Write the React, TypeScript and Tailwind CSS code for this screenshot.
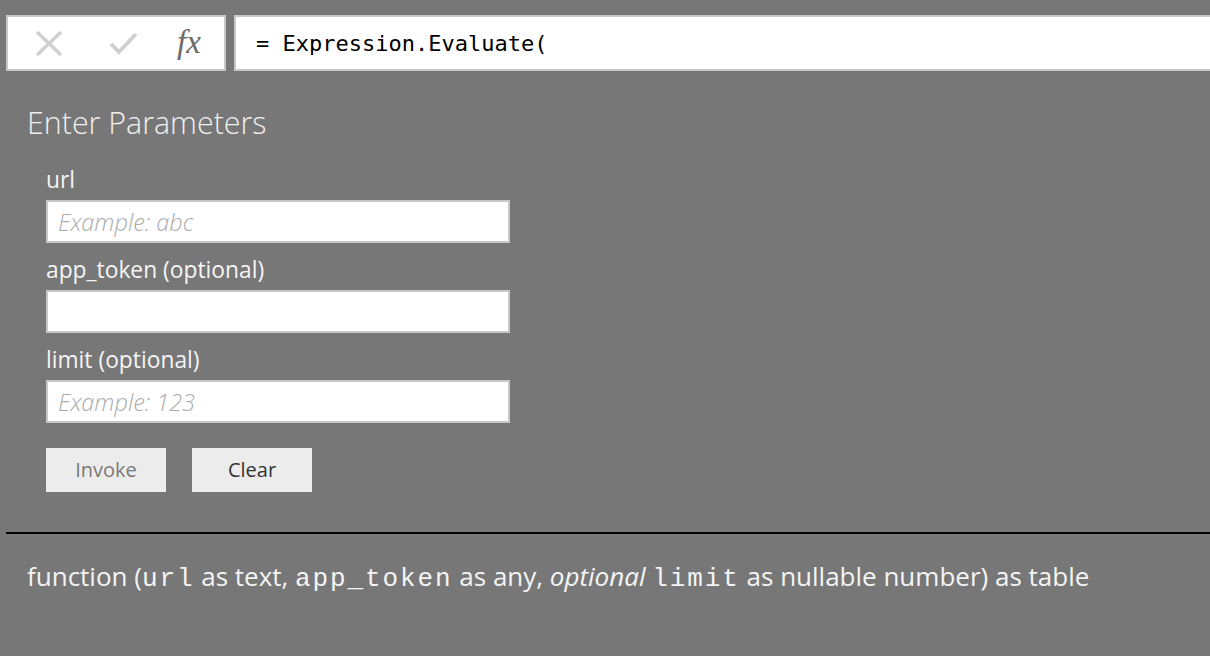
import React from "react";

const sans = "font-['Segoe_UI','Open_Sans',sans-serif]";
const mono = "font-['Liberation_Mono',monospace] text-[26px] tracking-[1.9px]";

const Field = ({ label, placeholder }: { label: string; placeholder?: string }) => (
  <div className="flex flex-col">
    <label className="text-[22.8px] leading-[30px] text-[#f4f4f4] mb-[5px]">{label}</label>
    <input
      className="w-[464px] h-[43px] bg-white border-2 border-[#c8c8c8] px-[10px] text-[23.5px] outline-none placeholder:italic placeholder:font-light placeholder:text-[#ababab]"
      placeholder={placeholder}
    />
  </div>
);

export default function App() {
  return (
    <div className={`w-[1210px] h-[656px] bg-[#777777] overflow-hidden ${sans}`}>
      {/* formula bar */}
      <div className="flex gap-[8px] pt-[15px] pl-[6px]">
        <div className="w-[220px] h-[56px] bg-white border-2 border-[#c8c8c8] flex items-center">
          <svg className="ml-[26px]" width="30" height="27" viewBox="0 0 30 27">
            <path d="M3 2 L27 25 M27 2 L3 25" stroke="#d0d0d0" strokeWidth="3.5" fill="none" />
          </svg>
          <svg className="ml-[45px]" width="30" height="26" viewBox="0 0 30 26">
            <path d="M2 14 L10 22 L27 4" stroke="#d0d0d0" strokeWidth="4" fill="none" />
          </svg>
          <span className="ml-[38px] text-[33px] italic text-[#6a6a6a] font-['Liberation_Serif',serif] leading-none -mt-[2px]">
            fx
          </span>
        </div>
        <div className="flex-1 h-[56px] bg-white border-2 border-r-0 border-[#c8c8c8] flex items-center pl-[20px]">
          <span className="text-[22px] text-black font-['DejaVu_Sans_Mono',monospace]">
            = Expression.Evaluate(
          </span>
        </div>
      </div>

      {/* parameters */}
      <div className="pl-[27px] pt-[33px]">
        <h1 className="text-[30.4px] leading-[38px] text-[#f0f0f0] font-light">Enter Parameters</h1>
        <div className="pl-[19px] pt-[23px] flex flex-col gap-[12px]">
          <Field label="url" placeholder="Example: abc" />
          <Field label="app_token (optional)" />
          <Field label="limit (optional)" placeholder="Example: 123" />
          <div className="flex gap-[26px] mt-[13px]">
            <button className="w-[120px] h-[44px] bg-[#ececec] text-[20px] text-[#7a7a7a]">Invoke</button>
            <button className="w-[120px] h-[44px] bg-[#ececec] text-[20px] text-[#333333]">Clear</button>
          </div>
        </div>
      </div>

      <div className="ml-[6px] mt-[40px] h-[2px] bg-black" />

      <p className="pl-[27px] pt-[24px] text-[26px] leading-[36px] text-[#f4f4f4]">
        function (<span className={mono}>url</span> as text, <span className={mono}>app_token</span> as any,{" "}
        <i>optional</i> <span className={mono}>limit</span> as nullable number) as table
      </p>
    </div>
  );
}
